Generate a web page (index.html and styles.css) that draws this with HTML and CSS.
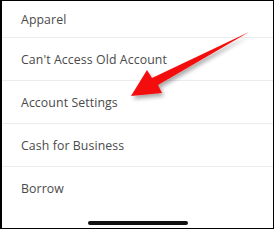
FILE: index.html
```html
<!DOCTYPE html>
<html>
<head>
<meta charset="utf-8">
<link rel="stylesheet" href="styles.css">
</head>
<body>
<div class="frame">
  <ul class="menu">
    <li class="item first">Apparel</li>
    <li class="item">Can't Access Old Account</li>
    <li class="item">Account Settings</li>
    <li class="item">Cash for Business</li>
    <li class="item last">Borrow</li>
  </ul>
  <div class="home-bar"></div>
  <svg class="arrow" width="275" height="230" viewBox="0 0 275 230">
    <defs>
      <filter id="sh" x="-20%" y="-20%" width="140%" height="140%">
        <feGaussianBlur in="SourceAlpha" stdDeviation="2"/>
        <feOffset dx="2" dy="3" result="b"/>
        <feComponentTransfer><feFuncA type="linear" slope="0.35"/></feComponentTransfer>
        <feMerge><feMergeNode/><feMergeNode in="SourceGraphic"/></feMerge>
      </filter>
    </defs>
    <path d="M249 32 L158 85 L162 93 L131 96 L147 70 L152 78 Z" fill="#f40f0f" filter="url(#sh)"/>
  </svg>
</div>
</body>
</html>
```
FILE: styles.css
```css
html, body {
  margin: 0;
  padding: 0;
  background: #fff;
}
.frame {
  position: relative;
  width: 271px;
  height: 227px;
  border: 1px solid #000;
  border-left-width: 2px;
  background: #fff;
  overflow: hidden;
  font-family: "Open Sans", "Liberation Sans", sans-serif;
}
.menu {
  list-style: none;
  margin: 0;
  padding: 0;
}
.item {
  height: 42px;
  border-bottom: 1px solid #ececec;
  display: flex;
  align-items: center;
  padding-left: 19px;
  font-size: 12.3px;
  color: #4a4a4a;
  letter-spacing: 0.1px;
}
.item.first {
  height: 36px;
}
.item.last {
  border-bottom: none;
}
.home-bar {
  position: absolute;
  left: 86px;
  top: 220px;
  width: 100px;
  height: 4px;
  border-radius: 2px;
  background: #111;
}
.arrow {
  position: absolute;
  left: -2px;
  top: -1px;
}
```
